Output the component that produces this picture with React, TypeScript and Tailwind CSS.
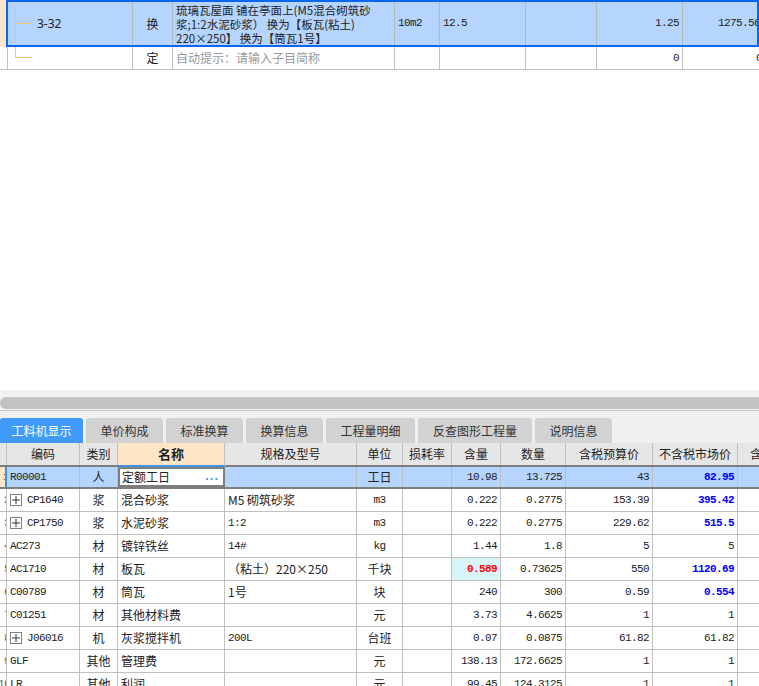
import React from "react";

const cjk = "font-['Noto_Sans_CJK_SC',sans-serif]";
const mono = "font-['Liberation_Mono','Noto_Sans_CJK_SC',monospace] text-[11px] tracking-[-0.6px]";

type Row = {
    no: string;
    code: string;
    plus?: boolean;
    kind: string;
    name: string;
    spec: string;
    unit: string;
    content: string;
    qty: string;
    taxPrice: string;
    market: string;
    marketBlue?: boolean;
    contentRed?: boolean;
};

const rows: Row[] = [
    { no: "1", code: "R00001", kind: "人", name: "定额工日", spec: "", unit: "工日", content: "10.98", qty: "13.725", taxPrice: "43", market: "82.95", marketBlue: true },
    { no: "2", code: "CP1640", plus: true, kind: "浆", name: "混合砂浆", spec: "M5 砌筑砂浆", unit: "m3", content: "0.222", qty: "0.2775", taxPrice: "153.39", market: "395.42", marketBlue: true },
    { no: "3", code: "CP1750", plus: true, kind: "浆", name: "水泥砂浆", spec: "1:2", unit: "m3", content: "0.222", qty: "0.2775", taxPrice: "229.62", market: "515.5", marketBlue: true },
    { no: "4", code: "AC273", kind: "材", name: "镀锌铁丝", spec: "14#", unit: "kg", content: "1.44", qty: "1.8", taxPrice: "5", market: "5" },
    { no: "5", code: "AC1710", kind: "材", name: "板瓦", spec: "（粘土）220×250", unit: "千块", content: "0.589", qty: "0.73625", taxPrice: "550", market: "1120.69", marketBlue: true, contentRed: true },
    { no: "6", code: "C00789", kind: "材", name: "筒瓦", spec: "1号", unit: "块", content: "240", qty: "300", taxPrice: "0.59", market: "0.554", marketBlue: true },
    { no: "7", code: "C01251", kind: "材", name: "其他材料费", spec: "", unit: "元", content: "3.73", qty: "4.6625", taxPrice: "1", market: "1" },
    { no: "8", code: "J06016", plus: true, kind: "机", name: "灰浆搅拌机", spec: "200L", unit: "台班", content: "0.07", qty: "0.0875", taxPrice: "61.82", market: "61.82" },
    { no: "9", code: "GLF", kind: "其他", name: "管理费", spec: "", unit: "元", content: "138.13", qty: "172.6625", taxPrice: "1", market: "1" },
    { no: "10", code: "LR", kind: "其他", name: "利润", spec: "", unit: "元", content: "99.45", qty: "124.3125", taxPrice: "1", market: "1" },
];

const tabs = [
    { label: "工料机显示", w: "w-[83px]" },
    { label: "单价构成", w: "w-[77px]" },
    { label: "标准换算", w: "w-[77px]" },
    { label: "换算信息", w: "w-[77px]" },
    { label: "工程量明细", w: "w-[89px]" },
    { label: "反查图形工程量", w: "w-[114px]" },
    { label: "说明信息", w: "w-[77px]" },
];

const descLines = ["琉璃瓦屋面 铺在亭面上(M5混合砌筑砂", "浆;1:2水泥砂浆） 换为【板瓦(粘土)", "220×250】 换为【筒瓦1号】"];

const isAscii = (s: string) => /^[\x00-\x7f]*$/.test(s);

const PlusBox = () => (
    <span className="inline-flex items-center justify-center w-[12px] h-[12px] border border-[#808080] bg-white mr-[5px] shrink-0">
        <svg width="8" height="8" viewBox="0 0 8 8">
            <path d="M0 4h8M4 0v8" stroke="#333" strokeWidth="1" />
        </svg>
    </span>
);

const TopTable = () => (
    <div className={`${cjk} text-[12px] text-[#222] shrink-0`}>
        {/* selected item row */}
        <div className="flex h-[47px]">
            <div className="w-[6px] shrink-0 bg-[#fde6c8]" />
            <div className="flex flex-1 bg-[#b5d5ff] border-2 border-[#0a66f0] overflow-hidden">
                <div className="relative w-[125px] shrink-0 border-r border-[#b8b8b8] flex items-center">
                    <div className="absolute left-[7px] top-[3px] bottom-[-2px] w-px bg-[#f8c27a]" />
                    <div className="absolute left-[7px] top-[21px] w-[17px] h-px bg-[#f8c27a]" />
                    <span className="pl-[29px] font-['Noto_Sans','Noto_Sans_CJK_SC',sans-serif]">3-32</span>
                </div>
                <div className="w-[40px] shrink-0 border-r border-[#b8b8b8] flex items-center justify-center">换</div>
                <div className="w-[222px] shrink-0 border-r border-[#b8b8b8] pl-[3px] flex flex-col justify-center whitespace-nowrap overflow-hidden">
                    {descLines.map((l) => (
                        <div key={l} className="h-[14px] leading-[14px] text-[11.5px]">
                            {l}
                        </div>
                    ))}
                </div>
                <div className={`w-[45px] shrink-0 border-r border-[#b8b8b8] flex items-center pl-[3px] ${mono}`}>10m2</div>
                <div className={`w-[86px] shrink-0 border-r border-[#b8b8b8] flex items-center pl-[3px] ${mono}`}>12.5</div>
                <div className="w-[71px] shrink-0 border-r border-[#b8b8b8]" />
                <div className={`w-[86px] shrink-0 border-r border-[#b8b8b8] flex items-center justify-end pr-[3px] ${mono}`}>1.25</div>
                <div className={`w-[80px] shrink-0 flex items-center justify-end pr-[3px] ${mono}`}>1275.56</div>
            </div>
        </div>
        {/* empty child row */}
        <div className="flex h-[23px] border-b border-[#c0c0c0]">
            <div className="w-[8px] shrink-0 border-r border-[#c0c0c0]" />
            <div className="relative w-[125px] shrink-0 border-r border-[#c0c0c0]">
                <div className="absolute left-[7px] top-0 h-[11px] w-px bg-[#f8c27a]" />
                <div className="absolute left-[7px] top-[10px] w-[17px] h-px bg-[#f8c27a]" />
            </div>
            <div className="w-[40px] shrink-0 border-r border-[#c0c0c0] flex items-center justify-center">定</div>
            <div className="w-[222px] shrink-0 border-r border-[#c0c0c0] flex items-center pl-[3px] text-[#9a9a9a]">自动提示：请输入子目简称</div>
            <div className="w-[45px] shrink-0 border-r border-[#c0c0c0]" />
            <div className="w-[86px] shrink-0 border-r border-[#c0c0c0]" />
            <div className="w-[71px] shrink-0 border-r border-[#c0c0c0]" />
            <div className={`w-[86px] shrink-0 border-r border-[#c0c0c0] flex items-center justify-end pr-[3px] ${mono}`}>0</div>
            <div className={`w-[80px] shrink-0 flex items-center justify-end pr-[1px] ${mono}`}>0</div>
        </div>
    </div>
);

const cols = [
    { key: "code", label: "编码", w: "w-[73px]" },
    { key: "kind", label: "类别", w: "w-[38px]" },
    { key: "name", label: "名称", w: "w-[107px]" },
    { key: "spec", label: "规格及型号", w: "w-[132px]" },
    { key: "unit", label: "单位", w: "w-[46px]" },
    { key: "loss", label: "损耗率", w: "w-[49px]" },
    { key: "content", label: "含量", w: "w-[49px]" },
    { key: "qty", label: "数量", w: "w-[65px]" },
    { key: "taxPrice", label: "含税预算价", w: "w-[87px]" },
    { key: "market", label: "不含税市场价", w: "w-[85px]" },
    { key: "extra", label: "含税市场价", w: "w-[85px]" },
];

const DataRow = ({ row, selected }: { row: Row; selected: boolean }) => {
    const cell = "shrink-0 border-r border-[#c0c0c0] flex items-center overflow-hidden whitespace-nowrap";
    const num = `${cell} justify-end pr-[3px] ${mono}`;
    return (
        <div
            className={`flex shrink-0 ${selected ? "h-[22px] bg-[#b5d5ff] border-b-2 border-[#7d7d7d]" : "h-[23px] border-b border-[#c0c0c0]"}`}
        >
            <div
                className={`w-[7px] shrink-0 flex items-center justify-end overflow-hidden ${mono} text-[#555] ${
                    selected ? "bg-[#fde6c8] border-r-2 border-[#3d8ef0]" : "bg-white border-r border-[#c0c0c0]"
                }`}
            >
                <span className="mr-[-4px]">{row.no}</span>
            </div>
            <div className={`${cols[0].w} ${cell} pl-[3px] ${mono}`}>
                {row.plus && <PlusBox />}
                {row.code}
            </div>
            <div className={`${cols[1].w} ${cell} justify-center`}>{row.kind}</div>
            {selected ? (
                <div className={`${cols[2].w} shrink-0 bg-white border-2 border-[#7d7d7d] flex items-center justify-between pl-[2px] pr-[4px]`}>
                    <span>{row.name}</span>
                    <span className="text-[#3d8ef0] font-bold tracking-[1px] text-[11px] leading-none pb-[4px]">...</span>
                </div>
            ) : (
                <div className={`${cols[2].w} ${cell} pl-[3px]`}>{row.name}</div>
            )}
            <div className={`${cols[3].w} ${cell} pl-[3px] ${isAscii(row.spec) ? mono : ""}`}>{row.spec}</div>
            <div className={`${cols[4].w} ${cell} justify-center ${isAscii(row.unit) ? mono : ""}`}>{row.unit}</div>
            <div className={`${cols[5].w} ${cell}`} />
            <div className={`${cols[6].w} ${num} ${row.contentRed ? "bg-[#d9f6f6] text-[#ff0000] font-bold" : ""}`}>{row.content}</div>
            <div className={`${cols[7].w} ${num}`}>{row.qty}</div>
            <div className={`${cols[8].w} ${num}`}>{row.taxPrice}</div>
            <div className={`${cols[9].w} ${num} ${row.marketBlue ? "text-[#0000ff] font-bold" : ""}`}>{row.market}</div>
            <div className={`${cols[10].w} ${cell}`} />
        </div>
    );
};

const BottomPanel = () => (
    <div className={`${cjk} text-[12px] text-[#222] shrink-0`}>
        {/* tabs */}
        <div className="bg-[#f0f0f0] border-t border-[#c4c4c4] pt-[7px] flex gap-[3px]">
            {tabs.map((t, i) => (
                <div
                    key={t.label}
                    className={`${t.w} h-[25px] flex items-center justify-center rounded-t-[3px] ${
                        i === 0 ? "bg-[#3f9bf7] text-white" : "bg-[#d2d2d2] text-[#333]"
                    }`}
                >
                    {t.label}
                </div>
            ))}
        </div>
        {/* header */}
        <div className="flex h-[24px] bg-[#e6e6e6] border-b-2 border-[#7d7d7d]">
            <div className="w-[7px] shrink-0 border-r border-[#c0c0c0]" />
            {cols.map((c) => (
                <div
                    key={c.key}
                    className={`${c.w} shrink-0 border-r border-[#c0c0c0] flex items-center justify-center overflow-hidden whitespace-nowrap ${
                        c.key === "name" ? "bg-[#fde6c8] font-bold text-[13px] border-b-2 border-b-[#4a90e2] mb-[-2px]" : ""
                    }`}
                >
                    {c.label}
                </div>
            ))}
        </div>
        {rows.map((r, i) => (
            <DataRow key={r.code} row={r} selected={i === 0} />
        ))}
    </div>
);

export default function App() {
    return (
        <div className="w-[759px] h-[686px] overflow-hidden bg-white flex flex-col">
            <TopTable />
            <div className="h-[320px] shrink-0 bg-white" />
            {/* horizontal scrollbar */}
            <div className="h-[20px] bg-[#f2f2f2] pt-[7px] shrink-0">
                <div className="h-[12px] bg-[#c2c2c2] rounded-l-[6px]" />
            </div>
            <BottomPanel />
        </div>
    );
}
